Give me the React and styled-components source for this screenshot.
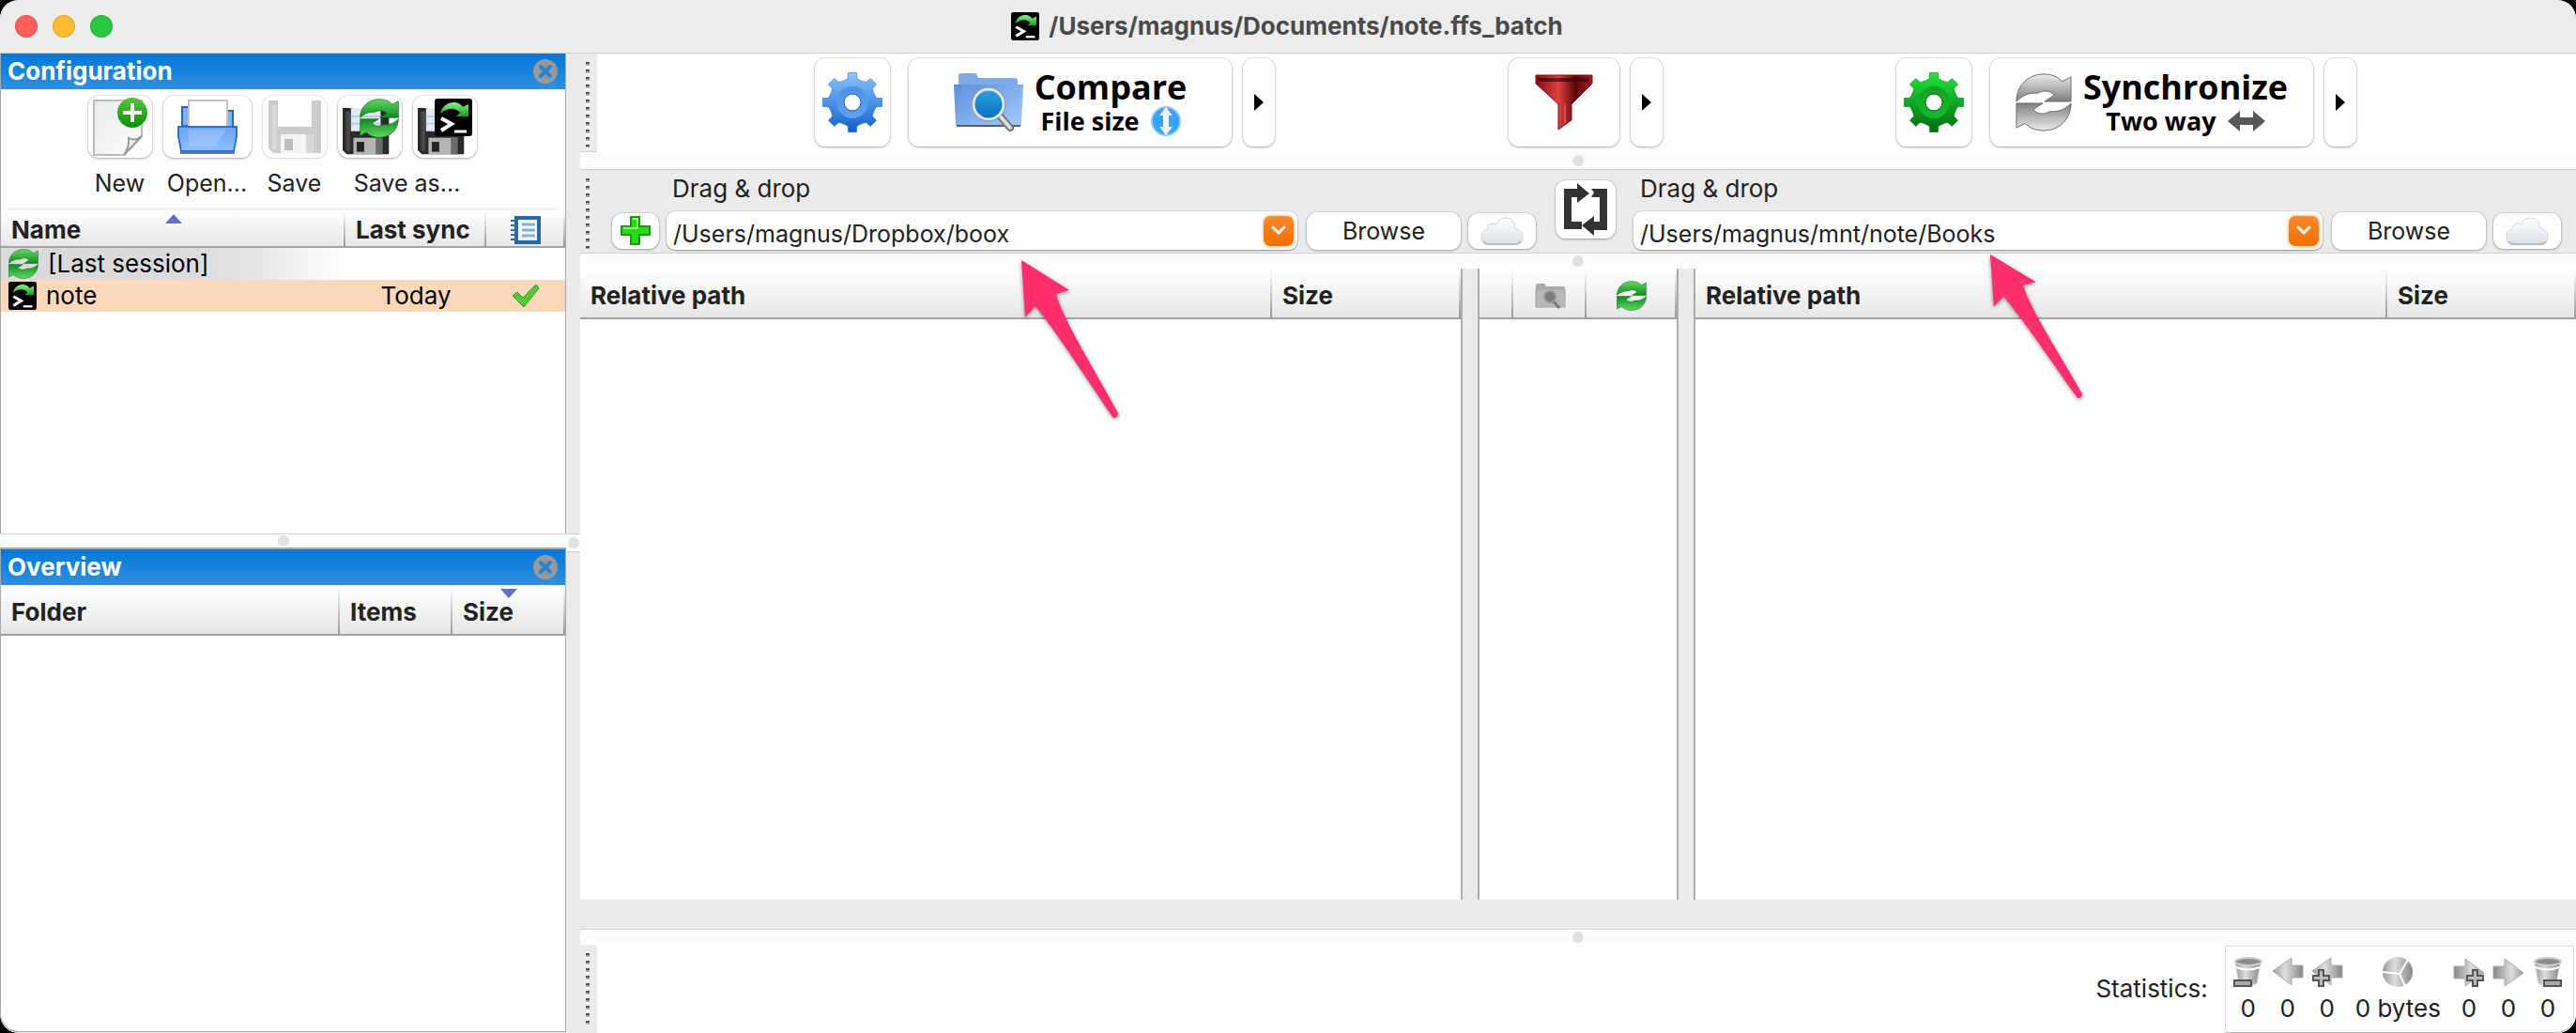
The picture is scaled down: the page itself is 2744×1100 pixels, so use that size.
import React, { useId } from "react";
import styled, { createGlobalStyle } from "styled-components";

const UI = `Inter, Roboto, "Liberation Sans", sans-serif`;
const LABEL = `"Open Sans", "Noto Sans", "DejaVu Sans", sans-serif`;
const GREY = "#ebebeb";

const GlobalStyle = createGlobalStyle`
  *, *::before, *::after { box-sizing: border-box; }
  body { margin: 0; background: #000; font-family: ${UI}; font-size: 26px; line-height: 32px; color: #222; }
  button, input { font: inherit; font-size: 25px; color: inherit; margin: 0; padding: 0; border: 0; }
  h1, h2, p, dl, dd, dt { margin: 0; font: inherit; }
  svg { display: block; flex: none; overflow: visible; }
`;

/* ---------- window ---------- */
const Window = styled.div`
  display: flex;
  flex-direction: column;
  min-height: 100vh;
  border-radius: 20px;
  overflow: hidden;
  background: ${GREY};
`;
const TitleBar = styled.header`
  display: grid;
  grid-template-columns: 1fr auto 1fr;
  align-items: center;
  height: 57px;
  padding: 0 18px 0 16px;
  background: #ececec;
  border-bottom: 1px solid #cfcfcf;
`;
const Lights = styled.div`
  display: flex;
  gap: 16px;
`;
const Light = styled.button`
  width: 24px;
  height: 24px;
  border-radius: 50%;
  background: ${(p) => p.$color};
  box-shadow: inset 0 0 0 1px rgba(0, 0, 0, 0.12);
`;
const Title = styled.h1`
  display: flex;
  align-items: center;
  gap: 10px;
  font-size: 26px;
  line-height: 32px;
  font-weight: 700;
  color: #4a4a4a;
`;
const Main = styled.main`
  flex: 1;
  display: grid;
  grid-template-columns: 603px 15px minmax(0, 1fr);
`;

/* ---------- sidebar ---------- */
const Sidebar = styled.aside`
  display: flex;
  flex-direction: column;
  padding-bottom: 1px;
`;
const Panel = styled.section`
  flex: ${(p) => p.$basis || "1"};
  background: #fff;
  border: 1px solid #a6a6a6;
  border-width: ${(p) => (p.$framed ? "2px 1px 1px" : "0 1px")};
  border-bottom-left-radius: ${(p) => (p.$framed ? "20px" : "0")};
`;
const PanelTitle = styled.h2`
  display: flex;
  align-items: center;
  justify-content: space-between;
  height: 38px;
  padding: 0 8px 0 7px;
  background: linear-gradient(#0078d7, #338fdf);
  color: #fff;
  font-weight: 700;
`;
const PlainButton = styled.button`
  display: flex;
  background: none;
`;
const ConfigTools = styled.div`
  display: flex;
  justify-content: center;
  gap: 12px;
  padding: 7px 2px 10px 0;
  font-size: 25px;
`;
const ToolGroup = styled.div`
  display: flex;
  flex-direction: column;
  align-items: center;
  gap: 11px;
`;
const ToolRow = styled.div`
  display: flex;
  gap: 12px;
`;
const Face = styled.button`
  display: flex;
  align-items: center;
  justify-content: center;
  flex: none;
  width: ${(p) => p.$w}px;
  height: ${(p) => p.$h}px;
  border-radius: 11px;
  background: #fff;
  box-shadow: 0 0 0 1px rgba(0, 0, 0, 0.08), 0 1px 3px rgba(0, 0, 0, ${(p) => (p.disabled ? 0.08 : 0.28)});
`;
const Rule = styled.div`
  height: 3px;
  margin: 0 6px 0 7px;
  background: #f4f4f4;
`;
const Splitter = styled.div`
  display: flex;
  align-items: center;
  justify-content: center;
  height: ${(p) => p.$h}px;
  background: #fcfcfc;
  border: 0 solid #d0d0d0;
  border-top-width: ${(p) => (p.$top ? 1 : 0)}px;
  border-bottom-width: ${(p) => (p.$bottom ? 1 : 0)}px;
`;
const Dot = styled.span`
  width: 12px;
  height: 12px;
  border-radius: 50%;
  background: #e1e1e1;
`;
const Sash = styled.div`
  background: ${GREY};
  padding-top: 511px;
`;

/* ---------- tables ---------- */
const Table = styled.table`
  width: 100%;
  table-layout: fixed;
  border-collapse: separate;
  border-spacing: 0;
`;
const Head = styled.th`
  position: relative;
  height: ${(p) => p.$h || 54}px;
  padding: ${(p) => (p.$h ? "4px" : "6px")} 0 0 ${(p) => (p.$icon ? 0 : 11)}px;
  text-align: left;
  font-weight: 700;
  background: linear-gradient(#fff, #9a9a9a) right / 2px 100% no-repeat, linear-gradient(#fff, #e7e7e7);
  border-bottom: 2px solid #a3a3a3;
  & > svg { margin: 0 auto; }
`;
const SortMark = styled.span`
  position: absolute;
  left: 50%;
  top: 4px;
  margin-left: -9px;
  border: 9px solid transparent;
  border-top-width: ${(p) => (p.$up ? 0 : 10)}px;
  border-bottom-width: ${(p) => (p.$up ? 10 : 0)}px;
  border-top-color: #6470c8;
  border-bottom-color: #6470c8;
`;
const Row = styled.tr`
  background: ${(p) => (p.$selected ? "#fcd8bb" : "none")};
  color: #000;
`;
const Cell = styled.td`
  height: 34px;
  padding: ${(p) => (p.$name ? "0 0 0 8px" : "0")};
  text-align: center;
  background: ${(p) => (p.$fade ? "linear-gradient(90deg, #dadada 50%, #e4e4e4 72%, #fff)" : "none")};
  & > svg { margin: 0 auto; }
`;
const NameLine = styled.div`
  display: flex;
  align-items: center;
  gap: 10px;
`;

/* ---------- work area ---------- */
const Work = styled.div`
  display: flex;
  flex-direction: column;
  min-width: 0;
`;
const Bar = styled.div`
  display: grid;
  grid-template-columns: 18px minmax(0, 1fr);
  height: ${(p) => p.$h}px;
`;
const Grip = styled.div`
  padding: 9px 6px 4px;
  background: ${GREY};
  border-bottom: 1px solid ${(p) => (p.$line ? "#d0d0d0" : GREY)};
  &::before {
    content: "";
    display: block;
    width: 4px;
    height: 100%;
    background: repeating-linear-gradient(#555 0 2px, #aaa 2px 4px, #fff 4px 6px, ${GREY} 6px 8px);
  }
`;
const Actions = styled.div`
  display: flex;
  justify-content: space-evenly;
  padding: 5px 2px 0 0;
  background: #fff;
`;
const ActionGroup = styled.div`
  display: flex;
  gap: 12px;
  margin: 0 17px;
`;
const WithMenu = styled.div`
  display: flex;
  gap: 12px;
  margin-left: ${(p) => (p.$spaced ? 8 : 0)}px;
`;
const BigLabel = styled.span`
  display: flex;
  flex-direction: column;
  align-items: center;
  margin-left: ${(p) => p.$gap}px;
  padding-top: 2px;
  font-family: ${LABEL};
  font-weight: 700;
  font-size: 36px;
  line-height: 38px;
  color: #000;
`;
const SmallLabel = styled.span`
  display: flex;
  align-items: center;
  gap: 12px;
  font-size: 27px;
  line-height: 34px;
`;
const Triangle = styled.span`
  border: 9px solid transparent;
  border-left: 10px solid #000;
  border-right-width: 0;
`;
const Folders = styled.div`
  display: grid;
  grid-template-columns: minmax(0, 984fr) 66px minmax(0, 988fr);
  column-gap: 19px;
  padding: 0 16px;
  background: ${GREY};
  border-bottom: 1px solid #d0d0d0;
`;
const Side = styled.div`
  display: flex;
  flex-direction: column;
  padding-top: 4px;
  min-width: 0;
`;
const DropLabel = styled.label`
  padding-left: ${(p) => (p.$indent ? 64 : 7)}px;
  margin-bottom: 8px;
`;
const PathRow = styled.div`
  display: flex;
  align-items: center;
  gap: 8px;
`;
const Combo = styled.div`
  position: relative;
  flex: 1;
  display: flex;
  align-items: center;
  height: 41px;
  min-width: 0;
  margin-right: 2px;
  padding: 0 4px 0 7px;
  background: #fff;
  border-radius: 9px;
  box-shadow: 0 0 0 1px rgba(0, 0, 0, 0.06), 0 1px 2px rgba(0, 0, 0, 0.35);
`;
const PathInput = styled.input`
  flex: 1;
  min-width: 0;
  height: 38px;
  padding-top: 6px;
  background: none;
  outline: none;
`;
const Drop = styled.button`
  display: flex;
  align-items: center;
  justify-content: center;
  width: 32px;
  height: 32px;
  border-radius: 7px;
  background: linear-gradient(#fb8a2c, #f56f00);
  box-shadow: 0 0 4px rgba(245, 120, 0, 0.6);
`;
const Swap = styled.div`
  display: flex;
  justify-content: flex-end;
  padding-top: 11px;
`;
const Pointer = styled.svg`
  position: absolute;
  left: ${(p) => p.$left}px;
  top: ${(p) => p.$top}px;
  z-index: 2;
  pointer-events: none;
  filter: drop-shadow(0 1px 2px rgba(0, 0, 0, 0.45));
`;
const Panes = styled.div`
  flex: 1;
  display: grid;
  grid-template-columns: minmax(0, 940fr) 214px minmax(0, 940fr);
  column-gap: 16px;
`;
const Pane = styled.section`
  background: #fff;
  border: 0 solid #acacac;
  border-left-width: ${(p) => (p.$left ? 2 : 0)}px;
  border-right-width: ${(p) => (p.$right ? 2 : 0)}px;
`;
const Gutter = styled.div`
  height: 31px;
  background: ${GREY};
`;
const Status = styled.div`
  display: flex;
  align-items: center;
  justify-content: flex-end;
  gap: 18px;
  padding-right: 2px;
  background: #fff;
`;
const Stats = styled.dl`
  display: flex;
  gap: 10px;
  height: 93px;
  padding: 11px 11px 0 8px;
  border: 1px solid #e0e0e0;
  border-bottom-color: #bbb;
  border-bottom-right-radius: 18px;
`;
const Stat = styled.div`
  display: flex;
  flex-direction: column;
  align-items: center;
  gap: 7px;
  min-width: 32px;
  padding: 0 ${(p) => (p.$wide ? 4 : 0)}px;
`;

/* ---------- icons ---------- */
const PALETTES = {
  green: ["#62d862", "#0f8a1e", "#0c6a18"],
  grey: ["#ececec", "#7e7e7e", "#6a6a6a"],
  blue: ["#8cc4ff", "#0f5fcc", "#2f7fe0"],
  deepGreen: ["#22e63a", "#006a10", "#0a7a1a"],
};
const Fade = ({ id, from, to, x2 = 0, y2 = 1 }) => (
  <linearGradient id={id} x1="0" y1="0" x2={x2} y2={y2}>
    <stop offset="0" stopColor={from} />
    <stop offset="1" stopColor={to} />
  </linearGradient>
);

function SyncIcon({ size = 32, tone = "green", h }) {
  const id = useId();
  const [a, b, line] = PALETTES[tone];
  const d = "M.5 15.500C.5 6 8 .5 16 .5c4 0 8 1.200 10.500 4L31.500 2v13.500H16.500L22 12c-2.500-2.500-6-3-9.500-1C8 10.500 4 12 .5 15.500z";
  return (
    <svg width={size} height={h || size} viewBox="0 0 32 32" preserveAspectRatio="none" aria-hidden="true">
      <defs><Fade id={id} from={a} to={b} /></defs>
      <path d={d} fill={`url(#${id})`} stroke={line} strokeWidth=".5" />
      <path d={d} transform="rotate(180 16 16)" fill={`url(#${id})`} stroke={line} strokeWidth=".5" />
    </svg>
  );
}

function BatchIcon({ size = 30 }) {
  const id = useId();
  return (
    <svg width={size} height={size} viewBox="0 0 40 40" aria-hidden="true">
      <defs><Fade id={id} from="#8af08a" to="#159a25" /></defs>
      <rect width="40" height="40" rx="3" fill="#000" />
      <path d="M6 16C8 8 14 4 20 4c5 0 8 2 10 5l6-3v13H23l4-4c-5-6-14-5-21 1z" fill={`url(#${id})`} />
      <path d="M7 21l11 6-11 7" fill="none" stroke="#fff" strokeWidth="4" />
      <path d="M21 35h13" stroke="#fff" strokeWidth="3" />
    </svg>
  );
}

function gearPath() {
  const parts = [];
  for (let i = 0; i < 8; i += 1) {
    const c = (i * Math.PI) / 4;
    [[-0.3, 25], [-0.18, 26], [-0.14, 32], [0.14, 32], [0.18, 26], [0.3, 25]].forEach(([o, r]) => {
      parts.push(`${(33 + r * Math.sin(c + o)).toFixed(1)} ${(33 - r * Math.cos(c + o)).toFixed(1)}`);
    });
  }
  return `M${parts.join("L")}Z`;
}
const GEAR = gearPath();
function GearIcon({ tone }) {
  const id = useId();
  const [a, b, ring] = PALETTES[tone];
  return (
    <svg width="66" height="66" viewBox="0 0 66 66" aria-hidden="true">
      <defs>
        <Fade id={id} from={a} to={b} />
        <Fade id={`${id}r`} from={ring} to={a} />
      </defs>
      <path d={GEAR} fill={`url(#${id})`} stroke={b} strokeOpacity=".5" strokeLinejoin="round" />
      <circle cx="33" cy="33" r="17" fill={`url(#${id}r)`} opacity=".55" />
      <circle cx="33" cy="33" r="9" fill="#fff" stroke={b} />
    </svg>
  );
}

function CompareIcon() {
  const id = useId();
  return (
    <svg width="74" height="62" viewBox="0 0 74 62" aria-hidden="true">
      <defs>
        <Fade id={id} from="#5a90dc" to="#a6ccfb" x2={1} />
        <Fade id={`${id}g`} from="#2a9fe0" to="#0a72bd" />
      </defs>
      <path d="M5 16V3q0-3 3-3h14q3 0 3 3l1 2h39q3 0 3 3v8z" fill="#7dabe8" />
      <path d="M0 12h74l-2 42q0 3-3 3H5q-3 0-3-3z" fill={`url(#${id})`} />
      <path d="M3 56h68" stroke="#555e70" strokeWidth="2" />
      <path d="M47 43L60 58" stroke="#777" strokeWidth="8" strokeLinecap="round" />
      <path d="M47 43L60 58" stroke="#ddd" strokeWidth="4" strokeLinecap="round" />
      <circle cx="37" cy="33" r="16" fill={`url(#${id}g)`} stroke="#e4e4dc" strokeWidth="3" />
      <circle cx="37" cy="33" r="18" fill="none" stroke="#8a96a5" strokeWidth="1" />
    </svg>
  );
}

const SizeIcon = () => (
  <svg width="32" height="32" viewBox="0 0 32 32" aria-hidden="true">
    <circle cx="16" cy="16" r="15" fill="#3ba2fb" stroke="#8dcbff" strokeWidth="2" />
    <path d="M16 1l7 9h-4v12h4l-7 9-7-9h4V10H9z" fill="#f4f4ff" />
  </svg>
);
const TwoWayIcon = () => (
  <svg width="40" height="22" viewBox="0 0 40 22" aria-hidden="true">
    <path d="M0 11L13 0v7h14V0l13 11-13 11v-7H13v7z" fill="#595959" />
  </svg>
);

function FilterIcon() {
  const id = useId();
  return (
    <svg width="60" height="60" viewBox="0 0 60 60" aria-hidden="true">
      <defs>
        <linearGradient id={id}>
          <stop offset="0" stopColor="#7c0d12" />
          <stop offset=".4" stopColor="#e04044" />
          <stop offset=".7" stopColor="#5a0508" />
          <stop offset="1" stopColor="#b01a20" />
        </linearGradient>
      </defs>
      <path d="M0 1h60v9L38 32v17L24 59V32L0 10z" fill={`url(#${id})`} stroke="#8a0f14" />
      <path d="M3 4h54v4H3z" fill="#2c0003" opacity=".6" />
      <path d="M31 32v20" stroke="#f06a6a" strokeWidth="2" opacity=".6" />
    </svg>
  );
}

const PlusIcon = () => (
  <svg width="32" height="32" viewBox="0 0 32 32" aria-hidden="true">
    <path d="M11 1h9v10h11v9H20v10h-9V20H1v-9h10z" fill="#2bdc12" stroke="#139c10" strokeWidth="2" />
    <path d="M13 3h5v10H3" fill="none" stroke="#9df58c" strokeWidth="2" />
  </svg>
);

function CloudIcon() {
  const id = useId();
  return (
    <svg width="46" height="32" viewBox="0 0 46 32" aria-hidden="true">
      <defs><Fade id={id} from="#ffffff" to="#dbe2e7" /></defs>
      <path
        d="M8 30Q1 30 1 22q0-6 6-8 0-6 7-6 2 0 3 1Q19 2 27 2q9 0 10 11 7 2 8 9 0 8-7 8z"
        fill={`url(#${id})`}
        stroke="#cfd6da"
      />
      <path d="M3 27q2 3 5 3h30q3 0 5-3" fill="none" stroke="#b4bcc0" strokeWidth="2" />
    </svg>
  );
}

const SwapIcon = () => (
  <svg width="46" height="56" viewBox="0 0 46 56" aria-hidden="true">
    <g fill="#333">
      <path d="M0 6h14V0l13 11-13 10v-6H8v26h11v8H0z" />
      <path d="M46 50H32v6L19 45l13-10v6h6V15H29l3-5-3-4h17z" />
    </g>
  </svg>
);

const ChevronIcon = () => (
  <svg width="14" height="9" viewBox="0 0 14 9" aria-hidden="true">
    <path d="M1 1l6 6 6-6" fill="none" stroke="#fff" strokeWidth="3" strokeLinecap="round" strokeLinejoin="round" />
  </svg>
);
const CloseIcon = () => (
  <svg width="26" height="26" viewBox="0 0 26 26" aria-hidden="true">
    <circle cx="13" cy="13" r="13" fill="#999" />
    <path d="M8 8l10 10M18 8L8 18" stroke="#2483da" strokeWidth="4" strokeLinecap="round" />
  </svg>
);

function NewIcon() {
  const id = useId();
  return (
    <svg width="58" height="62" viewBox="0 0 58 62" aria-hidden="true">
      <defs>
        <Fade id={id} from="#ececec" to="#fbfbfb" x2={1} />
        <Fade id={`${id}g`} from="#5cc43c" to="#079008" />
      </defs>
      <path d="M1 3h51v38L33 61H1z" fill={`url(#${id})`} stroke="#bbb" strokeWidth="2" />
      <path d="M33 61q6-8 5-18 7 4 14-2z" fill="#f6f6f6" stroke="#999" strokeWidth="2" />
      <circle cx="42" cy="16" r="16" fill={`url(#${id}g)`} />
      <path d="M42 6v20M32 16h20" stroke="#fff" strokeWidth="4" />
    </svg>
  );
}

function OpenIcon() {
  const id = useId();
  return (
    <svg width="64" height="58" viewBox="0 0 64 58" aria-hidden="true">
      <defs><Fade id={id} from="#6aa5f2" to="#8cc0ff" /></defs>
      <path d="M5 8h8v20H5zM51 12h8v18h-8z" fill="#7eb2f5" stroke="#2a68bd" strokeWidth="2" />
      <path d="M12 1h41v30H12z" fill="#fff" stroke="#c4c4c4" strokeWidth="2" />
      <path d="M1 29h62v10l-3 16H4L1 39z" fill={`url(#${id})`} stroke="#2f71c8" strokeWidth="2" />
      <path d="M12 32h40l-12 18H12z" fill="#fff" opacity=".18" />
      <path d="M3 57h58" stroke="#777" strokeWidth="2" />
    </svg>
  );
}

function Floppy({ pale }) {
  const dark = pale ? "#cccccc" : "#2a2a2a";
  return (
    <g>
      <path d="M0 0h56v56H5l-5-5z" fill={dark} />
      <path d="M4 4h5v48H4z" fill={pale ? "#dcdcdc" : "#555"} opacity=".7" />
      <path d="M10 0h36v28H10z" fill={pale ? "#fff" : "#dfe8f5"} />
      <path d="M10 10h36M10 19h36" stroke={pale ? "#fff" : "#b4c8e4"} strokeWidth="2" />
      <path d="M13 36h35v20H13z" fill={pale ? "#f4f4f4" : "#b4b4b4"} />
      <path d="M17 41h9v12h-9z" fill={pale ? "#bdbdbd" : "#222"} />
      <path d="M40 36h8v20h-8z" fill={pale ? "#d8d8d8" : "#6b6b6b"} />
    </g>
  );
}
const SaveIcon = () => (
  <svg width="56" height="56" viewBox="0 0 56 56" aria-hidden="true"><Floppy pale /></svg>
);
const SaveAsIcon = ({ batch }) => (
  <svg width="60" height="60" viewBox="0 0 60 60" aria-hidden="true">
    <g transform="translate(1 10) scale(.88)"><Floppy /></g>
    <g transform="translate(19 0)">{batch ? <BatchIcon size={40} /> : <SyncIcon size={42} />}</g>
  </svg>
);

const LogIcon = () => (
  <svg width="32" height="30" viewBox="0 0 32 30" aria-hidden="true">
    <rect x="6" y="2" width="24" height="26" fill="#f4f9ff" stroke="#2668a8" strokeWidth="4" />
    <path d="M12 9h14M12 15h14M12 21h14" stroke="#7fb2e0" strokeWidth="3" />
    <path d="M0 5h8M0 10h8M0 15h8M0 20h8M0 25h8" stroke="#356a9c" strokeWidth="2" />
  </svg>
);
const CheckIcon = () => (
  <svg width="30" height="26" viewBox="0 0 30 26" aria-hidden="true">
    <path d="M1 13l5-4 6 6L26 1l3 4-16 20z" fill="#58c63c" stroke="#2f9a2a" strokeLinejoin="round" />
  </svg>
);
const FolderGreyIcon = () => (
  <svg width="32" height="28" viewBox="0 0 32 28" aria-hidden="true">
    <path d="M1 3q0-2 2-2h7l2 3h18q2 0 2 2v20H1z" fill="#ababab" />
    <path d="M1 7h31v19H1z" fill="#b8b8b8" stroke="#a2a2a2" />
    <path d="M19 19l7 8" stroke="#777" strokeWidth="3" />
    <circle cx="16" cy="15" r="6" fill="#7c7c7c" stroke="#999" strokeWidth="2" />
  </svg>
);

/* ---------- statistics icons ---------- */
const Minus = ({ x }) => <rect x={x} y="25" width="18" height="6" fill="#aaa" stroke="#555" strokeWidth="2" />;
const Plus = ({ x }) => (
  <path transform={`translate(${x} 13)`} d="M7 1h5v6h6v5h-6v6H7v-6H1V7h6z" fill="#bbb" stroke="#555" strokeWidth="2" />
);
function StatIcon({ kind, flip }) {
  const id = useId();
  return (
    <svg width="32" height="32" viewBox="0 0 32 32" aria-hidden="true">
      <defs>
        <linearGradient id={id}>
          <stop offset="0" stopColor="#999" />
          <stop offset=".4" stopColor="#dedede" />
          <stop offset="1" stopColor="#858585" />
        </linearGradient>
      </defs>
      {kind === "bin" && (
        <>
          <path d="M2 5l4 23q10 5 19 0l4-23z" fill={`url(#${id})`} stroke="#ccc" />
          <path d="M3 11q12 5 25 0" fill="none" stroke="#fff" strokeWidth="2" />
          <ellipse cx="16" cy="5" rx="14" ry="4" fill="#8d8d8d" stroke="#ccc" strokeWidth="2" />
          <Minus x={flip ? 12 : 1} />
        </>
      )}
      {kind !== "bin" && kind !== "pie" && (
        <>
          <path
            d="M0 15L20 1v8h12v13H20v8z"
            transform={flip ? "rotate(180 16 16)" : undefined}
            fill={`url(#${id})`}
            stroke="#aaa"
          />
          {kind === "add" && <Plus x={flip ? 13 : 0} />}
        </>
      )}
      {kind === "pie" && (
        <>
          <circle cx="16" cy="16" r="16" fill={`url(#${id})`} />
          <path d="M0 16l18 2L27 3M18 18l6 13" fill="none" stroke="#fff" strokeWidth="2" />
        </>
      )}
    </svg>
  );
}

/* ---------- pieces ---------- */
const MenuButton = ({ label, w }) => (
  <Face $w={w} $h={94} aria-label={label}><Triangle /></Face>
);

function FolderSide({ id, value, add, pointer }) {
  return (
    <Side>
      <DropLabel htmlFor={id} $indent={add}>Drag &amp; drop</DropLabel>
      <PathRow>
        {add && <Face $w={50} $h={38} aria-label="Add folder pair"><PlusIcon /></Face>}
        <Combo>
          <PathInput id={id} type="text" defaultValue={value} />
          <Drop aria-label="Recent folders"><ChevronIcon /></Drop>
          <Pointer
            $left={pointer.left}
            $top={pointer.top}
            width={pointer.width}
            height={pointer.height}
            viewBox="0 0 103 168"
            preserveAspectRatio="none"
            aria-hidden="true"
          >
            <path d="M0 0L51 32L37 36C45 65 80 120 103 163Q103 168 98 168C75 135 40 80 15 49L4 61Z" fill="#ff2f6e" />
          </Pointer>
        </Combo>
        <Face $w={164} $h={40}>Browse</Face>
        <Face $w={72} $h={38} aria-label="Cloud storage"><CloudIcon /></Face>
      </PathRow>
    </Side>
  );
}

const FileTable = () => (
  <Table>
    <colgroup><col /><col style={{ width: 201 }} /></colgroup>
    <thead><tr><Head>Relative path</Head><Head>Size</Head></tr></thead>
  </Table>
);

const STATS = [
  ["bin", false, "0"], ["arrow", false, "0"], ["add", false, "0"], ["pie", false, "0 bytes"],
  ["add", true, "0"], ["arrow", true, "0"], ["bin", true, "0"],
];

export default function App() {
  return (
    <>
      <GlobalStyle />
      <Window>
        <TitleBar>
          <Lights>
            <Light $color="#ff5f57" aria-label="Close" />
            <Light $color="#febc2e" aria-label="Minimize" />
            <Light $color="#28c840" aria-label="Zoom" />
          </Lights>
          <Title><BatchIcon />/Users/magnus/Documents/note.ffs_batch</Title>
        </TitleBar>
        <Main>
          <Sidebar>
            <Panel $basis="0 0 49%">
              <PanelTitle>Configuration<PlainButton aria-label="Close configuration"><CloseIcon /></PlainButton></PanelTitle>
              <ConfigTools>
                <ToolGroup><Face $w={68} $h={66} aria-labelledby="t-new"><NewIcon /></Face><span id="t-new">New</span></ToolGroup>
                <ToolGroup><Face $w={94} $h={66} aria-labelledby="t-open"><OpenIcon /></Face><span id="t-open">Open...</span></ToolGroup>
                <ToolGroup><Face $w={68} $h={66} disabled aria-labelledby="t-save"><SaveIcon /></Face><span id="t-save">Save</span></ToolGroup>
                <ToolGroup>
                  <ToolRow>
                    <Face $w={68} $h={66} aria-labelledby="t-as"><SaveAsIcon /></Face>
                    <Face $w={68} $h={66} aria-labelledby="t-as"><SaveAsIcon batch /></Face>
                  </ToolRow>
                  <span id="t-as">Save as...</span>
                </ToolGroup>
              </ConfigTools>
              <Rule />
              <Table>
                <colgroup><col /><col style={{ width: 150 }} /><col style={{ width: 84 }} /></colgroup>
                <thead>
                  <tr>
                    <Head $h={40}>Name<SortMark $up /></Head>
                    <Head $h={40}>Last sync</Head>
                    <Head $h={40} $icon aria-label="Log"><LogIcon /></Head>
                  </tr>
                </thead>
                <tbody>
                  <Row>
                    <Cell $name $fade><NameLine><SyncIcon />[Last session]</NameLine></Cell><Cell /><Cell />
                  </Row>
                  <Row $selected>
                    <Cell $name><NameLine><BatchIcon />note</NameLine></Cell><Cell>Today</Cell><Cell><CheckIcon /></Cell>
                  </Row>
                </tbody>
              </Table>
            </Panel>
            <Splitter $h={15} $top><Dot /></Splitter>
            <Panel $framed>
              <PanelTitle>Overview<PlainButton aria-label="Close overview"><CloseIcon /></PlainButton></PanelTitle>
              <Table>
                <colgroup><col /><col style={{ width: 120 }} /><col style={{ width: 120 }} /></colgroup>
                <thead><tr><Head>Folder</Head><Head>Items</Head><Head>Size<SortMark /></Head></tr></thead>
              </Table>
            </Panel>
          </Sidebar>
          <Sash><Splitter $h={20} $top $bottom><Dot /></Splitter></Sash>
          <Work>
            <Bar $h={105}>
              <Grip $line />
              <Actions>
                <ActionGroup>
                  <Face $w={80} $h={94} aria-label="Comparison settings"><GearIcon tone="blue" /></Face>
                  <WithMenu $spaced>
                    <Face $w={344} $h={94}>
                      <CompareIcon />
                      <BigLabel $gap={12}>Compare<SmallLabel>File size<SizeIcon /></SmallLabel></BigLabel>
                    </Face>
                    <MenuButton label="Comparison options" w={34} />
                  </WithMenu>
                </ActionGroup>
                <ActionGroup>
                  <Face $w={118} $h={94} aria-label="Filter"><FilterIcon /></Face>
                  <MenuButton label="Filter options" w={34} />
                </ActionGroup>
                <ActionGroup>
                  <Face $w={80} $h={94} aria-label="Synchronization settings"><GearIcon tone="deepGreen" /></Face>
                  <WithMenu $spaced>
                    <Face $w={344} $h={94}>
                      <SyncIcon size={60} h={62} tone="grey" />
                      <BigLabel $gap={12}>Synchronize<SmallLabel>Two way<TwoWayIcon /></SmallLabel></BigLabel>
                    </Face>
                    <MenuButton label="Synchronization options" w={34} />
                  </WithMenu>
                </ActionGroup>
              </Actions>
            </Bar>
            <Splitter $h={19} $bottom><Dot /></Splitter>
            <Bar $h={89}>
              <Grip $line />
              <Folders>
                <FolderSide
                  id="left-path"
                  value="/Users/magnus/Dropbox/boox"
                  add
                  pointer={{ left: 378, top: 52, width: 103, height: 168 }}
                />
                <Swap><Face $w={64} $h={62} aria-label="Swap sides"><SwapIcon /></Face></Swap>
                <FolderSide
                  id="right-path"
                  value="/Users/magnus/mnt/note/Books"
                  pointer={{ left: 380, top: 46, width: 98, height: 153 }}
                />
              </Folders>
            </Bar>
            <Splitter $h={16}><Dot /></Splitter>
            <Panes>
              <Pane $right><FileTable /></Pane>
              <Pane $left $right>
                <Table>
                  <colgroup><col style={{ width: 36 }} /><col style={{ width: 78 }} /><col /></colgroup>
                  <thead>
                    <tr>
                      <Head aria-label="Selection" />
                      <Head $icon aria-label="Category"><FolderGreyIcon /></Head>
                      <Head $icon aria-label="Action"><SyncIcon /></Head>
                    </tr>
                  </thead>
                </Table>
              </Pane>
              <Pane $left><FileTable /></Pane>
            </Panes>
            <Gutter />
            <Splitter $h={17} $top><Dot /></Splitter>
            <Bar $h={94}>
              <Grip />
              <Status>
                <span>Statistics:</span>
                <Stats>
                  {STATS.map(([kind, flip, value], i) => (
                    <Stat key={i} $wide={kind === "pie"}>
                      <dt><StatIcon kind={kind} flip={flip} /></dt>
                      <dd>{value}</dd>
                    </Stat>
                  ))}
                </Stats>
              </Status>
            </Bar>
          </Work>
        </Main>
      </Window>
    </>
  );
}
